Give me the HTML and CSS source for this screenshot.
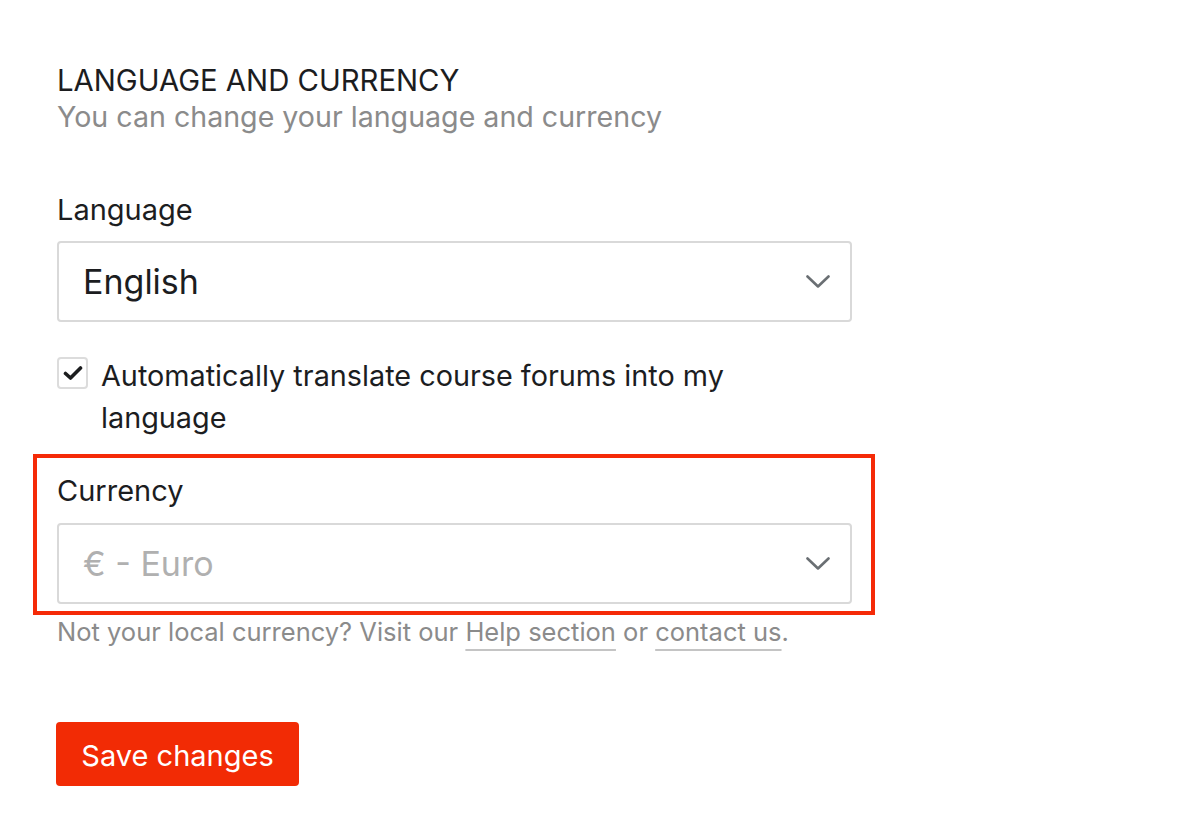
FILE: index.html
```html
<!DOCTYPE html>
<html lang="en">
<head>
<meta charset="utf-8">
<title>Language and currency</title>
<link rel="stylesheet" href="styles.css">
</head>
<body>
<main class="page">
  <section class="settings">
    <h2 class="title">LANGUAGE AND CURRENCY</h2>
    <p class="subtitle">You can change your language and currency</p>

    <div class="field field-language">
      <label class="label">Language</label>
      <div class="select">
        <span class="select-value">English</span>
        <svg class="chevron" width="24" height="14" viewBox="0 0 24 14"><path d="M1.5 1.5 L12 11.5 L22.5 1.5" fill="none" stroke="#6a6f73" stroke-width="2.6" stroke-linecap="round" stroke-linejoin="round"/></svg>
      </div>
    </div>

    <div class="check-row">
      <span class="checkbox">
        <svg width="20" height="16" viewBox="0 0 20 16"><path d="M2.5 8.5 L7.5 13 L17.5 3" fill="none" stroke="#1c1d1f" stroke-width="3.6" stroke-linecap="round" stroke-linejoin="round"/></svg>
      </span>
      <span class="check-label">Automatically translate course forums into my language</span>
    </div>

    <div class="highlight">
      <label class="label">Currency</label>
      <div class="select">
        <span class="select-value placeholder">€ - Euro</span>
        <svg class="chevron" width="24" height="14" viewBox="0 0 24 14"><path d="M1.5 1.5 L12 11.5 L22.5 1.5" fill="none" stroke="#6a6f73" stroke-width="2.6" stroke-linecap="round" stroke-linejoin="round"/></svg>
      </div>
    </div>
    <p class="help">Not your local currency? Visit our <a href="#">Help section</a> or <a href="#">contact us</a>.</p>

    <button class="save" type="button">Save changes</button>
  </section>
</main>
</body>
</html>
```

FILE: styles.css
```css
html, body {
  margin: 0;
  padding: 0;
  background: #ffffff;
}

body {
  font-family: Inter, "Noto Sans", "Liberation Sans", sans-serif;
  color: #1c1d1f;
}

.page {
  padding: 63px 0 0 57px;
}

.settings {
  width: 795px;
  display: flex;
  flex-direction: column;
}

.title {
  margin: 0;
  font-size: 29.3px;
  font-weight: 400;
  line-height: 36px;
  color: #1c1d1f;
}

.subtitle {
  margin: 0;
  font-size: 28.6px;
  line-height: 36px;
  color: #8b8b8b;
}

.field-language {
  margin-top: 57px;
}

.label {
  display: block;
  font-size: 29px;
  line-height: 36px;
  color: #1c1d1f;
  margin-bottom: 13px;
}

.select {
  box-sizing: border-box;
  height: 81px;
  border: 2px solid #d9d9d9;
  border-radius: 4px;
  display: flex;
  align-items: center;
  justify-content: space-between;
  padding: 0 20px 0 24px;
  background: #fff;
}

.select-value {
  font-size: 34px;
  color: #1c1d1f;
}

.select-value.placeholder {
  color: #b0b0b0;
}

.chevron {
  display: block;
}

.check-row {
  margin-top: 33px;
  display: flex;
  align-items: flex-start;
  gap: 13px;
}

.checkbox {
  box-sizing: border-box;
  flex: none;
  width: 31px;
  height: 32px;
  margin-top: 2px;
  border: 2px solid #dcdcdc;
  border-radius: 4px;
  display: flex;
  align-items: center;
  justify-content: center;
}

.check-label {
  font-size: 28.8px;
  line-height: 42px;
  width: 680px;
}

.highlight {
  margin: 15px -23px 0 -24px;
  border: 4px solid #f52a07;
  padding: 15px 19px 7px 20px;
}

.highlight .label {
  margin-bottom: 14px;
}

.help {
  margin: 0;
  font-size: 25.5px;
  line-height: 34px;
  color: #8b8b8b;
}

.help a {
  color: #8b8b8b;
  text-decoration: underline;
  text-decoration-color: #c4c4c4;
  text-decoration-thickness: 2px;
  text-underline-offset: 8px;
}

.save {
  align-self: flex-start;
  margin-top: 73px;
  margin-left: -1px;
  width: 243px;
  height: 64px;
  border: none;
  border-radius: 4px;
  background: #f22b05;
  color: #ffffff;
  font-family: Inter, "Noto Sans", "Liberation Sans", sans-serif;
  font-size: 29px;
  padding: 3px 0 0 0;
}
```
